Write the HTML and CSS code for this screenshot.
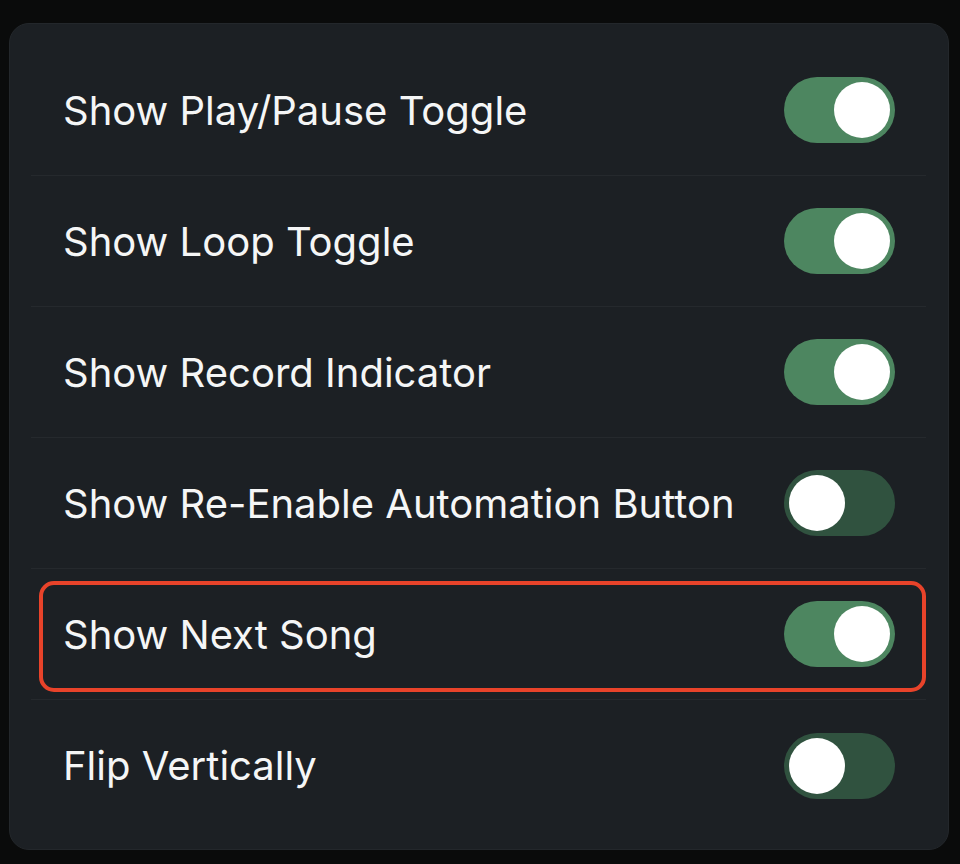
FILE: index.html
```html
<!DOCTYPE html>
<html>
<head>
<meta charset="utf-8">
<link rel="stylesheet" href="styles.css">
</head>
<body>
<div class="card">
  <div class="row"><span class="label">Show Play/Pause Toggle</span><span class="toggle on"><span class="knob"></span></span></div>
  <div class="row"><span class="label">Show Loop Toggle</span><span class="toggle on"><span class="knob"></span></span></div>
  <div class="row"><span class="label">Show Record Indicator</span><span class="toggle on"><span class="knob"></span></span></div>
  <div class="row"><span class="label">Show Re-Enable Automation Button</span><span class="toggle off"><span class="knob"></span></span></div>
  <div class="row highlighted"><span class="label">Show Next Song</span><span class="toggle on"><span class="knob"></span></span><span class="highlight-box"></span></div>
  <div class="row last"><span class="label">Flip Vertically</span><span class="toggle off"><span class="knob"></span></span></div>
</div>
</body>
</html>
```
FILE: styles.css
```css
html, body {
  margin: 0;
  padding: 0;
  background: #0a0b0b;
  width: 960px;
  height: 864px;
  overflow: hidden;
}
body {
  font-family: Inter, "Noto Sans", sans-serif;
  color: #f5f6f6;
}
.card {
  margin: 23px 0 0 9px;
  width: 940px;
  height: 827px;
  box-sizing: border-box;
  background: #1c2024;
  border: 1px solid #23272b;
  border-radius: 20px;
  padding: 21px 22px 0 21px;
}
.row {
  position: relative;
  height: 131px;
  box-sizing: border-box;
  border-bottom: 1px solid #25292d;
  display: flex;
  align-items: center;
  justify-content: space-between;
  padding: 0 31px 0 32px;
}
.row.last {
  border-bottom: none;
}
.label {
  font-size: 40px;
  font-weight: 400;
  letter-spacing: 0;
}
.toggle {
  width: 111px;
  height: 66px;
  border-radius: 33px;
  display: flex;
  align-items: center;
  padding: 0 5px;
  box-sizing: border-box;
  flex-shrink: 0;
}
.toggle.on {
  background: #4d8660;
  justify-content: flex-end;
}
.toggle.off {
  background: #30523f;
  justify-content: flex-start;
}
.knob {
  width: 56px;
  height: 56px;
  border-radius: 50%;
  background: #ffffff;
}
.highlight-box {
  position: absolute;
  left: 8px;
  right: 0;
  top: 12px;
  bottom: 7px;
  border: 4px solid #e8432a;
  border-radius: 15px;
}
```
